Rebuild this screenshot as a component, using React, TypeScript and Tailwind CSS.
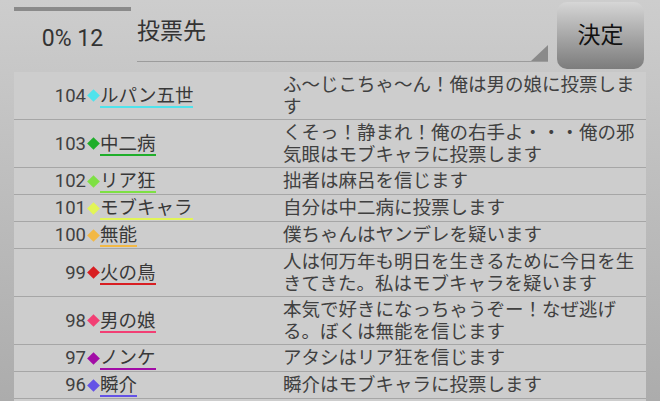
const rows = [
  { no: 104, name: "ルパン五世", dot: "bg-[#4fe3ec]", line: "border-[#4fe3ec]", text: "ふ〜じこちゃ〜ん！俺は男の娘に投票します" },
  { no: 103, name: "中二病", dot: "bg-[#1fae2a]", line: "border-[#1fae2a]", text: "くそっ！静まれ！俺の右手よ・・・俺の邪気眼はモブキャラに投票します" },
  { no: 102, name: "リア狂", dot: "bg-[#7ee044]", line: "border-[#7ee044]", text: "拙者は麻呂を信じます" },
  { no: 101, name: "モブキャラ", dot: "bg-[#e2f556]", line: "border-[#e2f556]", text: "自分は中二病に投票します" },
  { no: 100, name: "無能", dot: "bg-[#f2b844]", line: "border-[#f2b844]", text: "僕ちゃんはヤンデレを疑います" },
  { no: 99, name: "火の鳥", dot: "bg-[#d81e22]", line: "border-[#d81e22]", text: "人は何万年も明日を生きるために今日を生きてきた。私はモブキャラを疑います" },
  { no: 98, name: "男の娘", dot: "bg-[#f23f74]", line: "border-[#f23f74]", text: "本気で好きになっちゃうぞー！なぜ逃げる。ぼくは無能を信じます" },
  { no: 97, name: "ノンケ", dot: "bg-[#a20ca6]", line: "border-[#a20ca6]", text: "アタシはリア狂を信じます" },
  { no: 96, name: "瞬介", dot: "bg-[#6452e6]", line: "border-[#6452e6]", text: "瞬介はモブキャラに投票します" },
]

export default function App() {
  return (
    <div
      className="flex h-[401px] w-[660px] flex-col overflow-hidden bg-gradient-to-b from-[#cdcdcd] to-[#acacac] text-[#404040]"
      style={{ fontFamily: 'Roboto, "Noto Sans CJK JP", sans-serif' }}
    >
      <header className="flex h-[72px] shrink-0">
        <div className="ml-[14px] flex w-[117px] flex-col">
          <div className="mt-[7px] h-[4px] bg-[#8a8a8a]" />
          <div className="mt-[13px] text-center text-[23px] leading-[30px] text-[#333]">0% 12</div>
        </div>
        <div className="relative ml-[6px] h-[62px] w-[411px] border-b border-[#9c9c9c]">
          <div className="pt-[20px] text-[23px] leading-[24px] text-[#333]">投票先</div>
          <svg className="absolute bottom-0 right-0" width="17" height="16" viewBox="0 0 17 16">
            <polygon points="17,0 17,16 0,16" fill="#8a8a8a" />
          </svg>
        </div>
        <button className="ml-[9px] mt-[2px] flex h-[67px] w-[87px] items-center justify-center rounded-[10px] bg-gradient-to-b from-[#d6d6d6] to-[#7c7c7c] pt-[2px] text-[23px] text-[#111]">
          決定
        </button>
      </header>

      <div className="mx-[14px] flex-1 bg-[#cdcdcd]">
        {rows.map((r) => (
          <div key={r.no} className="flex border-b border-[#a6a6a6] pb-[1px] pt-[3px]">
            <div className="flex w-[269px] items-center">
              <div className="flex items-start">
                <span className="w-[72px] text-right text-[18.5px] leading-[20px]">{r.no}</span>
                <span className="flex h-[20px] w-[14px] items-center justify-center">
                  <span className={`h-[9px] w-[9px] rotate-45 ${r.dot}`} />
                </span>
                <span className={`border-b-2 text-[18.5px] leading-[20px] text-[#383838] ${r.line}`}>{r.name}</span>
              </div>
            </div>
            <div className="flex-1 pr-[2px] text-[18.5px] leading-[21.5px]">{r.text}</div>
          </div>
        ))}
      </div>
    </div>
  )
}
